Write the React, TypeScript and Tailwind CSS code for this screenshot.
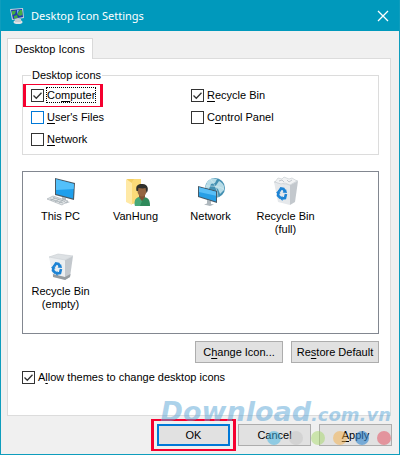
import React, { useState } from "react";

const ComputerIcon = () => (
    <svg width="32" height="32" viewBox="0 0 32 32" aria-hidden="true">
        <path d="M17 21l4 1v3l4 1-4 1.500-6-1.500 2-1z" fill="#b4bcc2" />
        <path d="M10 2l20 5-1 17-19-5z" fill="#4b5963" />
        <path d="M11 3.300l18 4.600-1 14.500-17-4.400z" fill="#1f9fec" />
        <path d="M11 3.300l18 4.600-.4 5L11 14z" fill="#53c0fa" />
        <path d="M2 23l6-3 15 5-6 4z" fill="#e1e4e6" stroke="#9fa8ae" strokeWidth=".6" />
        <path d="M5 23l13 4M8 21.500l12 4M6 24.500l4-2.500M10 26l4-3M14 27l4-3" stroke="#a3adb3" strokeWidth=".8" />
    </svg>
);

const UserFolderIcon = () => (
    <svg width="32" height="32" viewBox="0 0 32 32" aria-hidden="true">
        <path d="M7 3h14v23l-10 2z" fill="#f3ce63" />
        <path d="M12 6l2-3h7v22l-9 3z" fill="#fbda79" />
        <path d="M6 3l6 4v22l-6-3z" fill="#ffe9a6" />
        <path d="M15 30c-1-6 2-9 7-9 6 0 8 2 8 9z" fill="#2f8a5b" />
        <path d="M15 30c-1-5 0-8 4-9l3 4-2 5z" fill="#46a877" />
        <path d="M19 18h6v3l-3 4-3-4z" fill="#7d5434" />
        <ellipse cx="22" cy="15" rx="4.500" ry="5.500" fill="#946540" />
        <path d="M16.500 15c-1-5 1-7 5-7 6-1 8 5 5 9l-1-5c-3 1-5 0-7 0l-.5 3z" fill="#30302c" />
    </svg>
);

const NetworkIcon = () => (
    <svg width="32" height="32" viewBox="0 0 32 32" aria-hidden="true">
        <circle cx="20" cy="12" r="10" fill="#4490b2" />
        <path d="M12 6c3-4 7-4 10-3l-2 4-4 1-2 5-4-1zM24 5c4 2 6 5 5 9l-4 4-2-5-3-2z" fill="#b7dce7" />
        <path d="M15 3c5 5 7 10 8 18M11 10c6 0 12 0 18 3" stroke="#d6edf2" strokeWidth=".6" fill="none" />
        <path d="M12 24l4 1v3l3 .5-4 1.500-6-1.500 3-1z" fill="#aeb7bd" />
        <path d="M3 10l19 5v12L3 21z" fill="#455a68" />
        <path d="M4 11.300l17 4.400v9.900L4 20.200z" fill="#279fe6" />
        <path d="M4 11.300l17 4.400v4L4 16z" fill="#59bff7" />
    </svg>
);

const RecycleBinIcon = ({ full = false }: { full?: boolean }) => (
    <svg width="32" height="32" viewBox="0 0 32 32" aria-hidden="true">
        <path d="M4 6l16 3v20l-12-3z" fill={full ? "#e5e8eb" : "#eceff1"} />
        <path d="M20 9l8-4-3 21-5 3z" fill="#c3c8cd" />
        <path d="M4 6l9-3 15 2-8 4z" fill={full ? "#f4f5f6" : "#dde1e4"} stroke="#c8cdd1" strokeWidth=".6" />
        {full ? (
            <>
                <path d="M5 6l3-4 4 1 2-2 5 2 3-1 5 3-7 4-5-2-4 1z" fill="#f1f2f3" stroke="#c3c9ce" strokeWidth=".6" />
                <path d="M9 5l3-1 2 2M17 4l2 2 3-2" fill="none" stroke="#aeb5bb" strokeWidth=".7" />
            </>
        ) : (
            <path d="M8 23l12 3 5.500-3-.5 3-5 3-12-3z" fill="#979da1" />
        )}
        <g fill="none" stroke="#1d83d4" strokeWidth="2.600">
            <path d="M9 15.500l2-3 2.500.5 1.500 3" />
            <path d="M16 18l-1 4-3 .5" />
            <path d="M10.500 22l-2.500-2.500.5-3" />
        </g>
        <path d="M12.500 16.500l4.500.5-1-4zM12.500 20v5l-3-3zM6 17l2.500-3 2 3.500z" fill="#1d83d4" />
    </svg>
);

const TitleIcon = () => (
    <svg width="16" height="16" viewBox="0 0 16 16" aria-hidden="true">
        <ellipse cx="9" cy="14" rx="4.500" ry="2" fill="#dfe3e6" />
        <path d="M6 11h6v3H6z" fill="#c5ccd1" />
        <path d="M1 1l13-1 1 10-12 2z" fill="#c5d0da" />
        <path d="M2 2l11-1 1 8-10 2z" fill="#1e3eae" />
        <path d="M3 3l4-.4L6 6 3 7zM8 6l3-4 2 0 .5 5-3 1zM5 8l3-1 1 3-4 .6z" fill="#42ad43" />
        <path d="M8 2l2 0-2 4z" fill="#77b6ed" />
    </svg>
);

// "&" goes before the access key letter
const KeyText = ({ text }: { text: string }) => {
    const [before, after] = text.split("&");
    if (after === undefined) return <>{text}</>;
    return (
        <span>
            {before}
            <span className="underline underline-offset-2">{after[0]}</span>
            {after.slice(1)}
        </span>
    );
};

const CheckBox = ({ id, text, checked, onChange, focused, hot }: any) => {
    return (
        <div className="flex h-[22px] items-center gap-[3px]">
            <span className="grid size-[13px] shrink-0">
                <input
                    type="checkbox"
                    id={id}
                    checked={checked}
                    onChange={onChange}
                    className={`peer col-start-1 row-start-1 size-[13px] appearance-none border bg-white ${hot ? "border-[#0078d7]" : "border-[#333333]"}`}
                />
                <svg
                    viewBox="0 0 13 13"
                    className="pointer-events-none invisible col-start-1 row-start-1 size-[13px] peer-checked:visible"
                    aria-hidden="true"
                >
                    <path d="M2.500 6.500l2.800 2.800 5.200-5.500" fill="none" stroke="#333333" strokeWidth="1.300" />
                </svg>
            </span>
            <label
                htmlFor={id}
                className={`leading-[14px] whitespace-nowrap ${focused ? "outline-1 outline-dotted outline-black" : ""}`}
            >
                <KeyText text={text} />
            </label>
        </div>
    );
};

const desktopItems = [
    { name: "This PC", icon: <ComputerIcon /> },
    { name: "VanHung", icon: <UserFolderIcon /> },
    { name: "Network", icon: <NetworkIcon /> },
    { name: "Recycle Bin (full)", icon: <RecycleBinIcon full /> },
    { name: "Recycle Bin (empty)", icon: <RecycleBinIcon /> },
];

const buttonStyle = "h-[22px] border border-[#adadad] bg-[#e1e1e1] text-center whitespace-nowrap";

const dots = [
    "bg-[#3db5e6]/50",
    "bg-[#bdbdbd]/40",
    "bg-[#a5d867]/50",
    "bg-[#f5b048]/50",
    "bg-[#2f86cf]/60",
    "bg-[#e5485a]/50",
];

const App = () => {
    const [options, setOptions] = useState<any>({
        computer: true,
        files: false,
        network: false,
        recycle: true,
        control: false,
        themes: true,
    });

    const toggle = (name: string) => ({
        id: name,
        checked: options[name],
        onChange: () => setOptions({ ...options, [name]: !options[name] }),
    });

    return (
        <div className="relative flex min-h-screen flex-col border border-t-0 border-[#0e9dbd] bg-[#f0f0f0] font-['Liberation_Sans',Arial,sans-serif] text-[11px] leading-[14px] text-black">
            <header className="flex h-[31px] items-center gap-[6px] bg-[#0099bc] pr-[10px] pl-2 text-white">
                <TitleIcon />
                <h1 className="flex-1 font-['Noto_Sans','Liberation_Sans',sans-serif] text-[11px]">Desktop Icon Settings</h1>
                <button type="button" aria-label="Close">
                    <svg width="12" height="12" viewBox="0 0 12 12">
                        <path d="M1 1l10 10M11 1L1 11" stroke="white" strokeWidth="1.300" />
                    </svg>
                </button>
            </header>

            <main className="flex flex-1 flex-col pt-[7px] pr-2 pl-[6px]">
                <div role="tablist" className="flex">
                    <button
                        type="button"
                        role="tab"
                        aria-selected="true"
                        className="z-10 -mb-px h-[21px] border border-b-0 border-[#d9d9d9] bg-white px-[7px]"
                    >
                        Desktop Icons
                    </button>
                </div>

                <div role="tabpanel" className="flex-1 border border-[#dcdcdc] bg-white pt-2 pr-[11px] pb-[27px] pl-[14px]">
                    <fieldset className="border border-[#dcdcdc] pb-[4px] pl-2">
                        <legend className="h-4 px-px leading-4">Desktop icons</legend>
                        <div className="mt-px grid grid-cols-[160px_1fr]">
                            <div className="relative">
                                <CheckBox text="Co&mputer" focused {...toggle("computer")} />
                                <div className="pointer-events-none absolute top-0 -left-2 h-[23px] w-20 border-x-3 border-y border-[#f5002f]" />
                            </div>
                            <CheckBox text="&Recycle Bin" {...toggle("recycle")} />
                            <CheckBox text="&User's Files" hot {...toggle("files")} />
                            <CheckBox text="C&ontrol Panel" {...toggle("control")} />
                            <CheckBox text="&Network" {...toggle("network")} />
                        </div>
                    </fieldset>

                    <ul className="mt-4 grid min-h-[163px] grid-cols-[repeat(auto-fill,75px)] content-start gap-y-[2px] border border-[#828790] pt-1">
                        {desktopItems.map((item) => (
                            <li key={item.name} className="flex h-[73px] flex-col items-center px-1 text-center leading-[13px]">
                                {item.icon}
                                <span className="mt-[2px]">{item.name}</span>
                            </li>
                        ))}
                    </ul>

                    <div className="mt-[7px] flex justify-end gap-2">
                        <button type="button" className={`${buttonStyle} w-[88px]`}>
                            <KeyText text="C&hange Icon..." />
                        </button>
                        <button type="button" className={`${buttonStyle} w-[88px]`}>
                            <KeyText text="Re&store Default" />
                        </button>
                    </div>

                    <div className="mt-[3px]">
                        <CheckBox text="A&llow themes to change desktop icons" {...toggle("themes")} />
                    </div>
                </div>
            </main>

            <footer className="flex justify-end gap-2 px-[7px] py-2">
                <div className="relative">
                    <button type="button" className="h-[22px] w-[73px] border-2 border-[#0078d7] bg-[#e1e1e1]">
                        OK
                    </button>
                    <div className="pointer-events-none absolute -inset-x-[6px] -inset-y-[5px] border-x-3 border-y-2 border-[#f5002f]" />
                </div>
                <button type="button" className={`${buttonStyle} w-[73px]`}>
                    Cancel
                </button>
                <button type="button" className={`${buttonStyle} w-[73px]`}>
                    <KeyText text="&Apply" />
                </button>
            </footer>

            {/* site watermark over the bottom right corner */}
            <div className="pointer-events-none absolute right-2 bottom-[9px] flex flex-col items-end gap-1">
                <p className="font-['DejaVu_Sans','Liberation_Sans',sans-serif] text-[27px] leading-6 font-bold whitespace-nowrap text-[#5aa5d6]/50 italic">
                    Download<span className="text-[18px]">.com.vn</span>
                </p>
                <div className="flex gap-2">
                    {dots.map((color) => (
                        <span key={color} className={`size-[14px] rounded-full ${color}`} />
                    ))}
                </div>
            </div>
        </div>
    );
};

export default App;
